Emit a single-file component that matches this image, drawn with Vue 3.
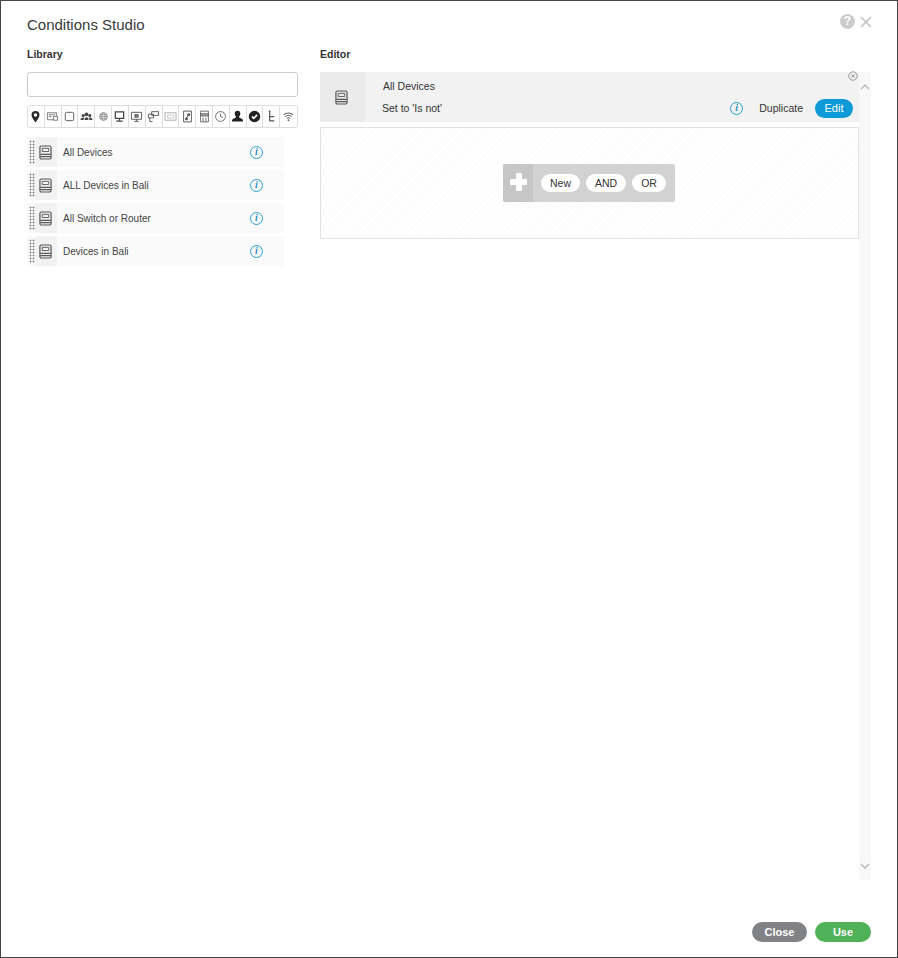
<script setup>
const dark = '#2b2b2b'
const grey = '#777'

// filter toolbar icons, 14x14 viewbox
const filters = [
  { name: 'location', shapes: [{ d: 'M7 1a4.3 4.3 0 0 0-4.3 4.3C2.700 8.200 7 13.200 7 13.200s4.300-5 4.300-7.900A4.300 4.300 0 0 0 7 1zm0 2.600a1.800 1.800 0 1 1 0 3.600 1.800 1.800 0 0 1 0-3.600z', fill: dark }] },
  { name: 'card', shapes: [{ d: 'M1.500 3h10v7.500h-10zM3 5.200h7M3 7.200h3', stroke: grey }, { d: 'M8 7h4.500v4H8z', stroke: grey, fill: '#fff' }] },
  { name: 'square', shapes: [{ d: 'M4 2.500h6A1.500 1.500 0 0 1 11.500 4v6a1.500 1.500 0 0 1-1.500 1.500H4A1.500 1.500 0 0 1 2.500 10V4A1.500 1.500 0 0 1 4 2.500z', stroke: '#555' }] },
  { name: 'users', shapes: [{ d: 'M7 2.600a2.100 2.100 0 1 1 0 4.200A2.100 2.100 0 0 1 7 2.600zM3.400 4.200a1.700 1.700 0 1 1 0 3.400 1.700 1.700 0 0 1 0-3.400zM10.600 4.200a1.700 1.700 0 1 1 0 3.400 1.700 1.700 0 0 1 0-3.400zM.5 10.800c0-1.800 1.200-2.800 2.900-2.800.5 0 .9.100 1.200.3C4.100 9 3.900 9.800 3.900 10.800zM13.500 10.800c0-1.800-1.200-2.800-2.900-2.800-.5 0-.9.100-1.200.3.500.7.700 1.500.7 2.500zM4.800 10.800c0-1.900.9-3.100 2.200-3.100s2.200 1.200 2.200 3.100z', fill: '#444' }] },
  { name: 'globe', shapes: [{ d: 'M7 2.800a4.200 4.200 0 1 1 0 8.400 4.200 4.200 0 0 1 0-8.400zM2.800 7h8.400M3.400 5h7.200M3.400 9h7.200M7 2.800c-2.400 2.400-2.400 6 0 8.400M7 2.800c2.400 2.400 2.400 6 0 8.400', stroke: '#888', width: 0.9 }] },
  { name: 'desktop', shapes: [{ d: 'M2.500 2h9v7h-9z', stroke: '#444', width: 1.300 }, { d: 'M7 9v2.600M3.500 12h7', stroke: '#444', width: 1.200 }] },
  { name: 'monitor', shapes: [{ d: 'M1.500 2.500h11v7.500h-11z', stroke: '#555' }, { d: 'M5.200 5h3.600v2.700H5.200zM7 10v2M4.500 12.200h5', stroke: '#555', fill: '#888' }] },
  { name: 'nodes', shapes: [{ d: 'M5 1.800h7.500v4H5zM1.500 4.500H7v4H1.500zM3 8.500v4h3', stroke: '#555', fill: 'none' }] },
  { name: 'id', shapes: [{ d: 'M1 3h12v8H1z', stroke: '#aaa' }, { d: 'M3.500 5.500h7v3h-7z', stroke: '#bbb', width: 0.8 }] },
  { name: 'file', shapes: [{ d: 'M2.800 1.200h8.400v11.600H2.800z', stroke: '#555' }, { d: 'M8.700 4.400l-3.400 5.200M5 9h1.800v1.500H5zM7.400 4.200h1.800v1.500H7.400z', stroke: '#333' }] },
  { name: 'building', shapes: [{ d: 'M2.800 1.200h8.400v11.600H2.800z', stroke: '#666' }, { d: 'M2.800 4h8.400v2.400H2.800zM5.500 8.200v4.600M8.500 8.200v4.600', stroke: '#666', fill: '#aaa' }] },
  { name: 'clock', shapes: [{ d: 'M7 1.700a5.300 5.300 0 1 1 0 10.600A5.300 5.300 0 0 1 7 1.700zM7 3.900V7l2.500 1.300', stroke: '#666' }] },
  { name: 'person', shapes: [{ d: 'M7 .8c1.900 0 3 1.400 3 3.200 0 1.300-.6 2.400-1.400 3 0 1 .6 1.500 1.900 1.900 1.500.5 2.500 1 2.500 3.600H1c0-2.600 1-3.100 2.500-3.600C4.800 8.500 5.400 8 5.400 7 4.600 6.400 4 5.300 4 4 4 2.200 5.100.8 7 .8z', fill: '#222' }] },
  { name: 'check', shapes: [{ d: 'M7 .8a6.200 6.200 0 1 1 0 12.400A6.200 6.200 0 0 1 7 .8z', fill: '#222' }, { d: 'M4.200 7l2 2 3.600-3.700', stroke: '#fff', width: 1.800 }] },
  { name: 'branch', shapes: [{ d: 'M5 2.500v9.500M5 11.800h5M5 7.200h5', stroke: '#555', width: 1.300 }, { d: 'M5 .6a1 1 0 1 1 0 2 1 1 0 0 1 0-2z', fill: '#555' }] },
  { name: 'wifi', shapes: [{ d: 'M1.800 5.200c3-2.600 7.400-2.600 10.400 0M3.500 7.200c2-1.700 5-1.700 7 0M5.300 9.100c1-.8 2.400-.8 3.400 0', stroke: '#666', width: 1.100 }, { d: 'M7 10a1 1 0 1 1 0 2 1 1 0 0 1 0-2z', fill: '#666' }] }
]

const conditions = ['All Devices', 'ALL Devices in Bali', 'All Switch or Router', 'Devices in Bali']
</script>

<template>
  <div class="dialog">
    <header class="dialog-head">
      <h1>Conditions Studio</h1>
      <div class="head-tools">
        <span class="help">?</span>
        <svg class="close-x" viewBox="0 0 12 12" width="12" height="12">
          <path d="M1 1l10 10M11 1L1 11" stroke="#ccc" stroke-width="1.800" fill="none" />
        </svg>
      </div>
    </header>

    <div class="columns">
      <section class="library">
        <h2>Library</h2>
        <input class="search" type="text" />
        <div class="filters">
          <span v-for="f in filters" :key="f.name" class="filter" :title="f.name">
            <svg viewBox="0 0 14 14" width="13" height="13">
              <path
                v-for="(s, i) in f.shapes"
                :key="i"
                :d="s.d"
                :fill="s.fill || 'none'"
                :stroke="s.stroke || 'none'"
                :stroke-width="s.width || 1"
              />
            </svg>
          </span>
        </div>
        <ul class="list">
          <li v-for="c in conditions" :key="c" class="row">
            <span class="grip"></span>
            <span class="book-cell">
              <svg viewBox="0 0 14 16" width="13" height="15">
                <path d="M2.500 1h9A1.500 1.500 0 0 1 13 2.500v11a1.500 1.500 0 0 1-1.500 1.500h-9A1.500 1.500 0 0 1 1 13.500v-11A1.500 1.500 0 0 1 2.500 1z" fill="none" stroke="#555" stroke-width="1.300" />
                <path d="M3.500 3.500h7v3.500h-7z" fill="none" stroke="#555" />
                <path d="M1.500 10h11M1.500 12.500h11" stroke="#555" stroke-width="1.200" fill="none" />
              </svg>
            </span>
            <span class="name">{{ c }}</span>
            <span class="info">i</span>
          </li>
        </ul>
      </section>

      <section class="editor">
        <h2>Editor</h2>
        <div class="editor-body">
          <div class="editor-main">
            <div class="selected">
              <span class="selected-icon">
                <svg viewBox="0 0 14 16" width="13" height="15">
                  <path d="M2.500 1h9A1.500 1.500 0 0 1 13 2.500v11a1.500 1.500 0 0 1-1.500 1.500h-9A1.500 1.500 0 0 1 1 13.500v-11A1.500 1.500 0 0 1 2.500 1z" fill="none" stroke="#555" stroke-width="1.300" />
                  <path d="M3.500 3.500h7v3.500h-7z" fill="none" stroke="#555" />
                  <path d="M1.500 10h11M1.500 12.500h11" stroke="#555" stroke-width="1.200" fill="none" />
                </svg>
              </span>
              <div class="selected-text">
                <div class="selected-name">All Devices</div>
                <div class="selected-rule">Set to 'Is not'</div>
              </div>
              <div class="selected-actions">
                <span class="info">i</span>
                <span class="duplicate">Duplicate</span>
                <button class="edit">Edit</button>
              </div>
              <svg class="remove" viewBox="0 0 10 10" width="10" height="10">
                <circle cx="5" cy="5" r="4.200" fill="none" stroke="#999" />
                <path d="M3.300 3.300l3.400 3.400M6.700 3.300L3.300 6.700" stroke="#999" fill="none" />
              </svg>
            </div>
            <div class="dropzone">
              <div class="builder">
                <span class="plus"></span>
                <div class="builder-btns">
                  <button>New</button>
                  <button>AND</button>
                  <button>OR</button>
                </div>
              </div>
            </div>
          </div>
          <div class="scrollbar">
            <svg viewBox="0 0 10 6" width="10" height="6"><path d="M1 5l4-4 4 4" stroke="#bbb" stroke-width="1.500" fill="none" /></svg>
            <svg viewBox="0 0 10 6" width="10" height="6"><path d="M1 1l4 4 4-4" stroke="#bbb" stroke-width="1.500" fill="none" /></svg>
          </div>
        </div>
      </section>
    </div>

    <footer class="dialog-foot">
      <button class="pill close">Close</button>
      <button class="pill use">Use</button>
    </footer>
  </div>
</template>

<style>
html, body {
  margin: 0;
  background: #fff;
}
</style>

<style scoped>
.dialog {
  box-sizing: border-box;
  width: 898px;
  height: 958px;
  border: 1px solid #444;
  padding: 0 26px 15px 26px;
  display: flex;
  flex-direction: column;
  background: #fff;
  color: #333;
  font-family: "Liberation Sans", Arial, sans-serif;
  overflow: hidden;
}
.dialog-head {
  height: 45px;
  display: flex;
  align-items: center;
  justify-content: space-between;
  flex: none;
  margin-right: -1px;
  padding-top: 1px;
  box-sizing: border-box;
}
h1 {
  margin: 0;
  font-size: 15px;
  font-weight: 400;
  color: #3a3a3a;
}
.head-tools {
  display: flex;
  align-items: center;
  gap: 5px;
  margin-top: -5px;
}
.help {
  width: 15px;
  height: 15px;
  border-radius: 50%;
  background: #ccc;
  color: #fff;
  font-size: 12px;
  font-weight: 700;
  text-align: center;
  line-height: 15px;
}
.columns {
  flex: 1;
  display: grid;
  grid-template-columns: 271px 551px;
  column-gap: 22px;
  min-height: 0;
}
h2 {
  margin: 0;
  height: 26px;
  font-size: 10.500px;
  font-weight: 700;
  line-height: 17px;
  color: #333;
}
.search {
  display: block;
  box-sizing: border-box;
  width: 100%;
  height: 25px;
  border: 1px solid #ccc;
  border-radius: 3px;
  background: #fff;
}
.filters {
  display: grid;
  grid-template-columns: repeat(16, 1fr);
  height: 23px;
  margin-top: 8px;
  border: 1px solid #ddd;
  border-radius: 3px;
  box-sizing: border-box;
}
.filter {
  display: flex;
  align-items: center;
  justify-content: center;
  border-right: 1px solid #ddd;
}
.filter:last-child {
  border-right: 0;
}
.list {
  list-style: none;
  margin: 9px 0 0;
  padding: 0;
  width: 257px;
  display: flex;
  flex-direction: column;
  gap: 3px;
}
.row {
  height: 30px;
  display: flex;
  align-items: center;
  background: #fafafa;
  font-size: 10px;
}
.grip {
  width: 6px;
  height: 24px;
  margin: 0 0 0 2px;
  background-image: radial-gradient(#888 0.9px, transparent 1.100px);
  background-size: 3px 3px;
}
.book-cell {
  width: 22px;
  height: 100%;
  margin-right: 6px;
  padding-right: 2px;
  box-sizing: border-box;
  display: flex;
  align-items: center;
  justify-content: center;
  background: #f2f2f2;
}
.name {
  flex: 1;
  color: #444;
}
.info {
  width: 13px;
  height: 13px;
  box-sizing: border-box;
  border: 1.500px solid #2a9fd0;
  border-radius: 50%;
  color: #2a8fc0;
  font: italic 700 10px/10px "Liberation Serif", serif;
  text-align: center;
  flex: none;
}
.row .info {
  margin-right: 21px;
}
.editor-body {
  display: flex;
  height: 808px;
}
.editor-main {
  width: 539px;
  flex: none;
}
.selected {
  position: relative;
  height: 50px;
  display: flex;
  align-items: center;
  background: #f2f2f2;
}
.selected-icon {
  width: 45px;
  height: 100%;
  flex: none;
  display: flex;
  align-items: center;
  justify-content: center;
  padding-right: 2px;
  box-sizing: border-box;
  background: #ebebeb;
}
.selected-text {
  flex: 1;
  padding-left: 17px;
  font-size: 10.500px;
  color: #333;
}
.selected-name {
  margin: 0 0 10px 1px;
}
.selected-actions {
  display: flex;
  align-items: center;
  align-self: flex-end;
  height: 20px;
  margin-bottom: 4px;
  margin-right: 6px;
  font-size: 10.500px;
}
.duplicate {
  margin: 0 12px 0 16px;
}
.edit {
  width: 38px;
  height: 19px;
  padding: 0;
  border: 0;
  border-radius: 10px;
  background: #0d9ad6;
  color: #fff;
  font: 11px "Liberation Sans", Arial, sans-serif;
}
.remove {
  position: absolute;
  top: -1px;
  right: 1px;
}
.dropzone {
  box-sizing: border-box;
  height: 112px;
  margin-top: 5px;
  padding-right: 1px;
  border: 1px solid #e2e2e2;
  display: flex;
  align-items: center;
  justify-content: center;
  background: repeating-linear-gradient(135deg, #fff 0 2px, #fcfcfc 2px 4px);
}
.builder {
  display: flex;
  width: 172px;
  height: 38px;
  border-radius: 2px;
  background: #d2d2d2;
}
.plus {
  position: relative;
  width: 30px;
  flex: none;
  background: #c6c6c6;
  border-radius: 2px 0 0 2px;
}
.plus::before,
.plus::after {
  content: "";
  position: absolute;
  background: #fff;
  border-radius: 1px;
}
.plus::before {
  left: 7px;
  top: 15px;
  width: 17px;
  height: 6px;
}
.plus::after {
  left: 13px;
  top: 9px;
  width: 6px;
  height: 18px;
}
.builder-btns {
  display: flex;
  align-items: center;
  gap: 6px;
  padding-left: 8px;
}
.builder-btns button {
  height: 18px;
  padding: 0 9px;
  border: 0;
  border-radius: 9px;
  background: #fff;
  color: #333;
  font: 10.500px "Liberation Sans", Arial, sans-serif;
}
.scrollbar {
  width: 12px;
  flex: none;
  background: #f8f8f8;
  display: flex;
  flex-direction: column;
  align-items: center;
  justify-content: space-between;
  padding: 12px 0 11px;
  box-sizing: border-box;
}
.dialog-foot {
  flex: none;
  display: flex;
  justify-content: flex-end;
  gap: 8px;
  height: 20px;
}
.pill {
  height: 20px;
  padding: 0;
  border: 0;
  border-radius: 10px;
  color: #fff;
  font: 700 11px "Liberation Sans", Arial, sans-serif;
}
.close {
  width: 55px;
  background: #808285;
}
.use {
  width: 56px;
  background: #4fb258;
}
</style>
